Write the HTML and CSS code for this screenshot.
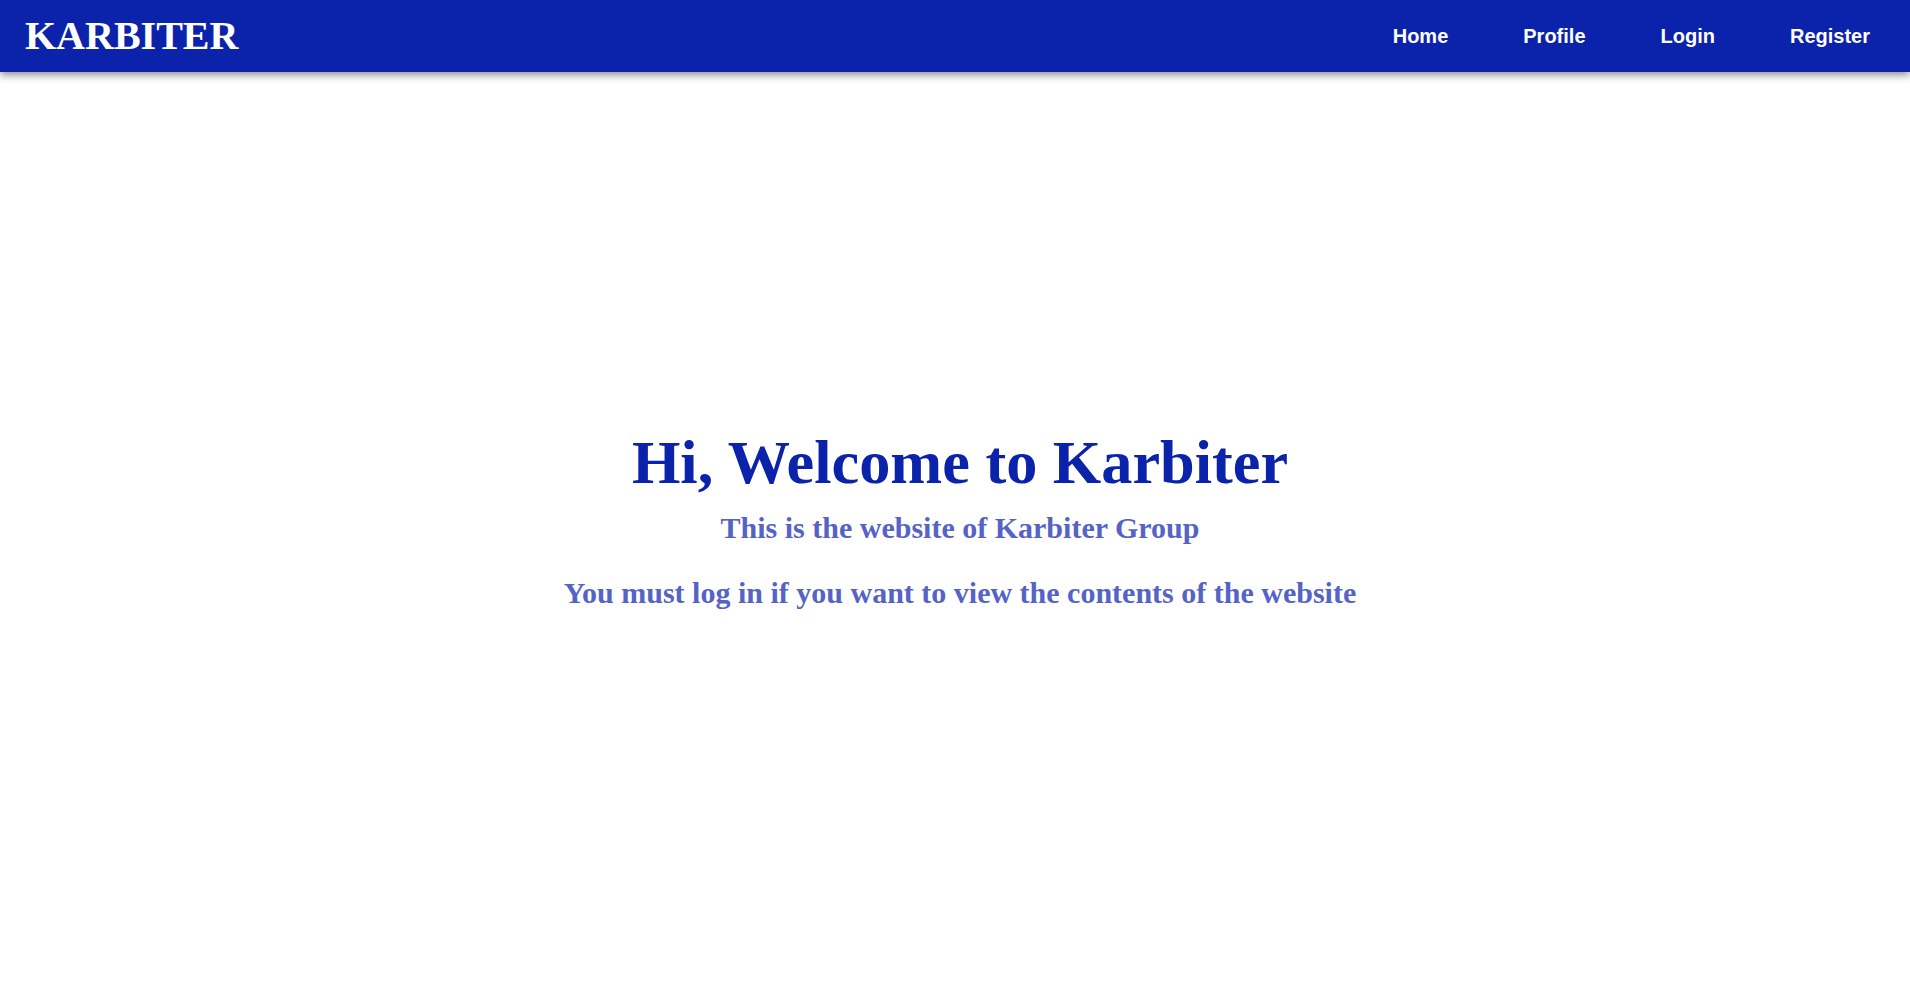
FILE: index.html
```html
<!DOCTYPE html>
<html lang="en">
<head>
<meta charset="utf-8">
<title>Karbiter</title>
<link rel="stylesheet" href="styles.css">
</head>
<body>
<header class="navbar">
  <div class="brand">KARBITER</div>
  <nav class="nav-links">
    <a href="#" class="nav-link">Home</a>
    <a href="#" class="nav-link">Profile</a>
    <a href="#" class="nav-link">Login</a>
    <a href="#" class="nav-link">Register</a>
  </nav>
</header>
<main class="hero">
  <h1 class="hero-title">Hi, Welcome to Karbiter</h1>
  <h2 class="hero-sub">This is the website of Karbiter Group</h2>
  <h2 class="hero-sub hero-note">You must log in if you want to view the contents of the website</h2>
</main>
</body>
</html>
```

FILE: styles.css
```css
* { box-sizing: border-box; }
html, body { margin: 0; padding: 0; }
body {
  background: #ffffff;
  font-family: "Liberation Serif", "Times New Roman", serif;
  height: 100vh;
  overflow: hidden;
}
.navbar {
  height: 72px;
  background: #0b22aa;
  display: flex;
  align-items: center;
  justify-content: space-between;
  padding: 0 40px 0 25px;
  box-shadow: 0 3px 8px rgba(0, 0, 0, 0.45);
  position: relative;
  z-index: 1;
}
.brand {
  font-family: "Liberation Serif", "Times New Roman", serif;
  font-weight: bold;
  font-size: 40px;
  color: #ffffff;
  line-height: 46px;
}
.nav-links {
  display: flex;
  align-items: center;
  gap: 75px;
}
.nav-link {
  font-family: "Liberation Sans", Arial, sans-serif;
  font-weight: bold;
  font-size: 20px;
  color: #ffffff;
  text-decoration: none;
}
.hero {
  height: calc(100vh - 72px);
  display: flex;
  flex-direction: column;
  align-items: center;
  justify-content: center;
  padding: 0 0 16px 10px;
  text-align: center;
}
.hero-title {
  margin: 0;
  font-size: 62.3px;
  line-height: 62px;
  font-weight: bold;
  color: #0b22aa;
}
.hero-sub {
  margin: 20px 0 0;
  font-size: 30px;
  line-height: 30px;
  font-weight: bold;
  color: #5563c6;
}
.hero-note {
  margin-top: 35px;
}
```
